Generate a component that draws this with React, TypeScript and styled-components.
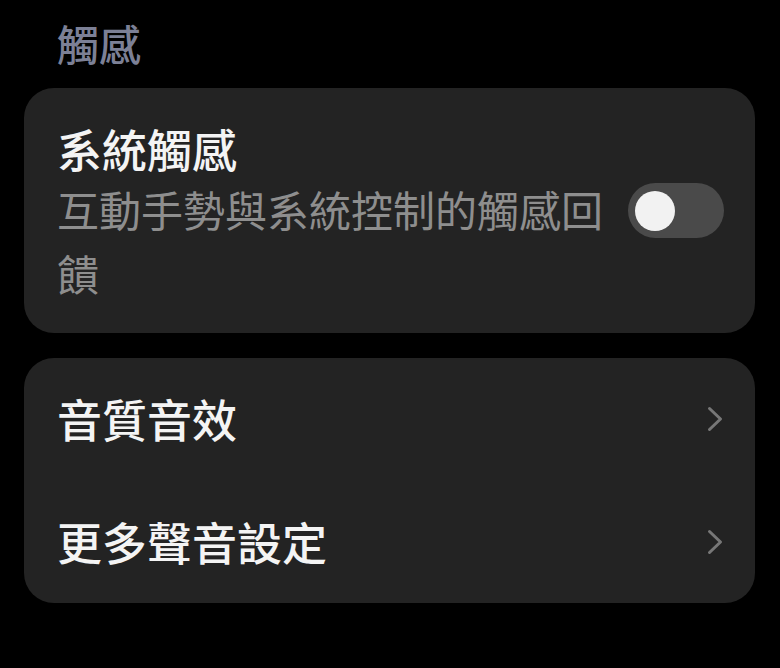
import { useState } from "react";
import styled, { createGlobalStyle } from "styled-components";

const GlobalStyle = createGlobalStyle`
  html, body {
    margin: 0;
    padding: 0;
    background: #000;
  }
  body {
    font-family: "Noto Sans CJK TC", "Noto Sans", sans-serif;
    -webkit-font-smoothing: antialiased;
  }
`;

// 設定列（有箭頭的項目）
const linkRows = ["音質音效", "更多聲音設定"];

const Chevron = () => (
  <svg width="16" height="26" viewBox="0 0 16 26" fill="none">
    <polyline
      points="2.5,2.5 13.5,13 2.5,23.5"
      stroke="#777"
      strokeWidth="3"
      strokeLinecap="round"
      strokeLinejoin="round"
    />
  </svg>
);

const App = () => {
  const [haptics, setHaptics] = useState(false);

  return (
    <>
      <GlobalStyle />
      <S.Page>
        <S.SectionTitle>觸感</S.SectionTitle>
        <S.Card>
          <S.SwitchRow>
            <S.TextBox>
              <S.Title>系統觸感</S.Title>
              <S.Summary>互動手勢與系統控制的觸感回饋</S.Summary>
            </S.TextBox>
            <S.Switch
              type="button"
              $on={haptics}
              onClick={() => setHaptics((v) => !v)}
            >
              <S.Knob $on={haptics} />
            </S.Switch>
          </S.SwitchRow>
        </S.Card>
        <S.Card>
          {linkRows.map((label) => (
            <S.LinkRow key={label}>
              <S.Title>{label}</S.Title>
              <Chevron />
            </S.LinkRow>
          ))}
        </S.Card>
      </S.Page>
    </>
  );
};

const S = {
  Page: styled.div`
    display: flex;
    flex-direction: column;
    gap: 25px;
    padding: 15px 25px 0 24px;
    width: 780px;
    box-sizing: border-box;
  `,
  SectionTitle: styled.div`
    font-size: 42px;
    line-height: 56px;
    font-weight: 500;
    color: #7c8096;
    padding-left: 33px;
    margin-bottom: -8px;
  `,
  Card: styled.div`
    background: #232323;
    border-radius: 30px;
    display: flex;
    flex-direction: column;
  `,
  SwitchRow: styled.div`
    display: flex;
    align-items: center;
    gap: 20px;
    padding: 33px 31px 28px 33px;
  `,
  TextBox: styled.div`
    flex: 1;
    min-width: 0;
  `,
  Title: styled.div`
    font-size: 45px;
    line-height: 56px;
    font-weight: 500;
    color: #f4f4f4;
  `,
  Summary: styled.div`
    font-size: 42px;
    line-height: 64px;
    color: #8e8e8e;
  `,
  Switch: styled.button<{ $on: boolean }>`
    flex: none;
    width: 96px;
    height: 55px;
    margin-bottom: 5px;
    border: none;
    border-radius: 28px;
    padding: 0 7px;
    display: flex;
    align-items: center;
    justify-content: ${({ $on }) => ($on ? "flex-end" : "flex-start")};
    background: ${({ $on }) => ($on ? "#3d7cf0" : "#4a4a4a")};
    cursor: pointer;
  `,
  Knob: styled.span<{ $on: boolean }>`
    width: 40px;
    height: 40px;
    border-radius: 50%;
    background: #f2f2f2;
  `,
  LinkRow: styled.div`
    height: 122.5px;
    display: flex;
    align-items: center;
    justify-content: space-between;
    padding: 0 32px 0 33px;
  `,
};

export default App;
